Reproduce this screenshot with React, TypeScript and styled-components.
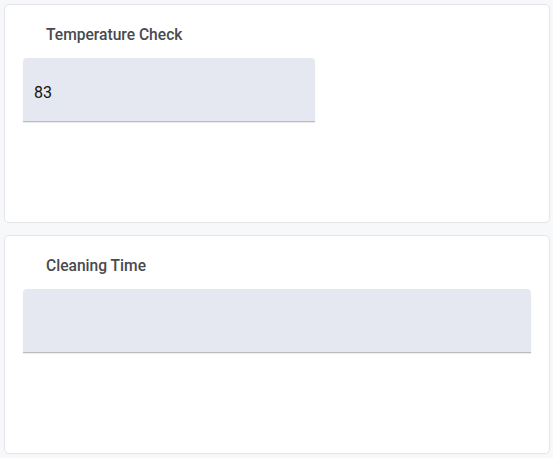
import React from "react";
import styled, { createGlobalStyle } from "styled-components";

const Global = createGlobalStyle`
  html, body { margin: 0; padding: 0; background: #f7f8fa; }
  body { font-family: Roboto, "Liberation Sans", sans-serif; }
`;

const Page = styled.div`
  display: flex;
  flex-direction: column;
  gap: 12px;
  padding: 4px 3px 4px 4px;
`;

const Card = styled.section`
  box-sizing: border-box;
  height: 219px;
  background: #ffffff;
  border: 1px solid #e3e5e8;
  border-radius: 5px;
  padding: 18px 18px 0 18px;
  display: flex;
  flex-direction: column;
`;

const Title = styled.div`
  margin-left: 23px;
  font-size: 15.6px;
  font-weight: 500;
  line-height: 24px;
  color: #474a4f;
`;

const Field = styled.div<{ $width?: string }>`
  box-sizing: border-box;
  margin-top: 11px;
  width: ${(p) => p.$width ?? "100%"};
  height: 64px;
  background: #e5e8f0;
  border-radius: 4px 4px 0 0;
  border-bottom: 1px solid #b9bbbf;
  box-shadow: 0 1px 1px rgba(0, 0, 0, 0.08);
  display: flex;
  align-items: center;
  padding: 6px 11px 0;
  font-size: 16px;
  color: #111;
`;

export default function App() {
  return (
    <>
      <Global />
      <Page>
        <Card>
          <Title>Temperature Check</Title>
          <Field $width="292px">83</Field>
        </Card>
        <Card>
          <Title>Cleaning Time</Title>
          <Field />
        </Card>
      </Page>
    </>
  );
}
